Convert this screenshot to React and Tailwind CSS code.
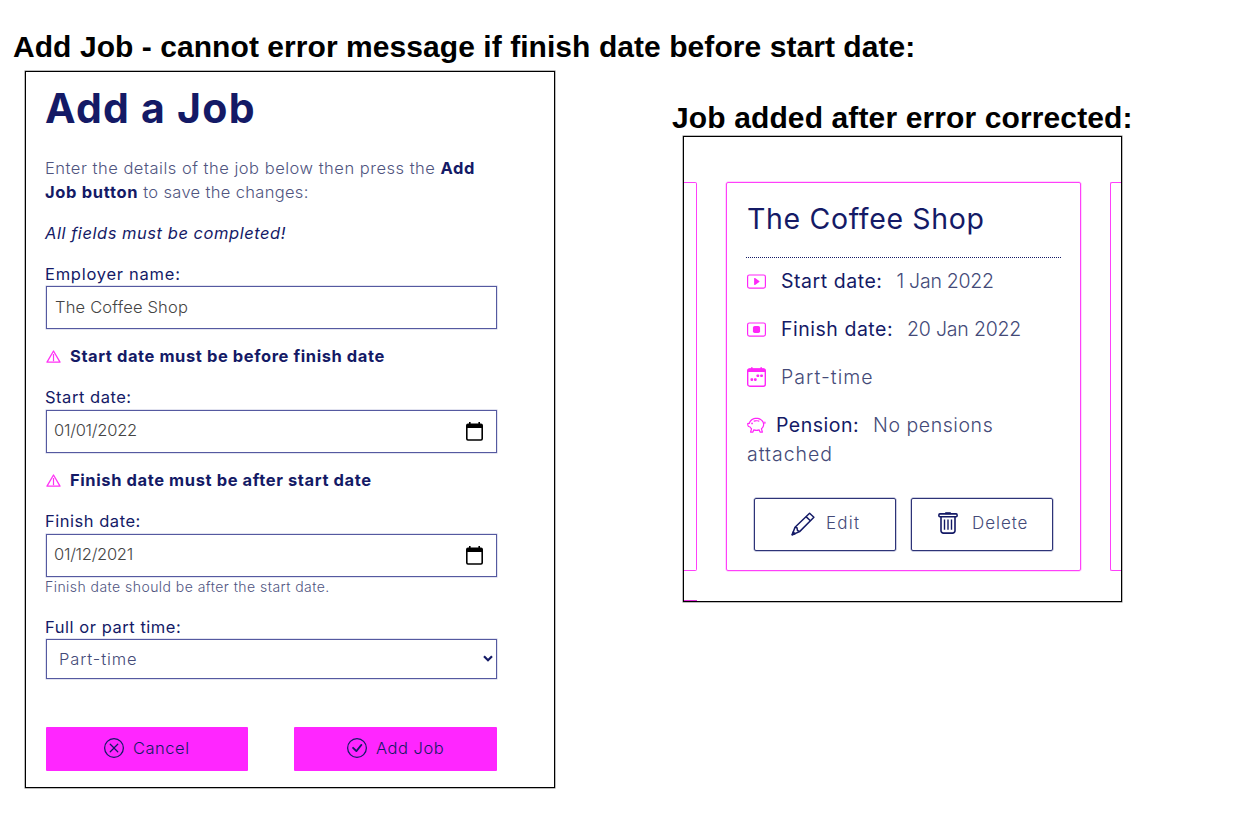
import { BsXCircle, BsCheckCircle, BsPlayBtn, BsStopBtn, BsPiggyBank } from "react-icons/bs";

function WarningIcon() {
  return (
    <svg className="h-[13px] w-[15px] shrink-0" viewBox="0 0 15 13" fill="none" stroke="#ff33f5" strokeLinejoin="round">
      <path d="M7.5 1 14 12.2H1Z" strokeWidth="1.3" />
      <path d="M7.5 4v7.200" strokeWidth="1.2" />
    </svg>
  );
}

function CalendarPicker() {
  return (
    <svg className="h-[19px] w-[17px] shrink-0" viewBox="0 0 17 19">
      <path fillRule="evenodd" fill="#000" d="M3 0h1.600v1.600h7.800V0H14v1.600h1a2 2 0 0 1 2 2V16.800a2 2 0 0 1-2 2H2a2 2 0 0 1-2-2V3.600a2 2 0 0 1 2-2h1ZM1.600 6v10.600q0 .6.6.6h12.600q.6 0 .6-.6V6Z" />
    </svg>
  );
}

function CalendarWeek() {
  return (
    <svg className="mt-[4px] h-[20px] w-[19px] shrink-0" viewBox="0 0 19 20" fill="none">
      <rect x=".7" y="2" width="17.600" height="17.200" rx="2" stroke="#ff26f9" strokeWidth="1.4" />
      <path d="M.5 5V3.500a2 2 0 0 1 2-2h14a2 2 0 0 1 2 2V5ZM4 .3h1.600V2H4ZM13.400.3H15V2h-1.600Z" fill="#ff26f9" />
      <g fill="#ff26f9">
        <rect x="9.500" y="7.400" width="2.700" height="2.700" rx=".8" />
        <rect x="13.200" y="7.400" width="2.700" height="2.700" rx=".8" />
        <rect x="3.500" y="11.200" width="2.700" height="2.700" rx=".8" />
        <rect x="7" y="11.200" width="2.700" height="2.700" rx=".8" />
      </g>
    </svg>
  );
}

function PencilIcon() {
  return (
    <svg className="h-[24px] w-[24px]" viewBox="0 0 24 24" fill="none" stroke="#141a66" strokeWidth="1.500" strokeLinejoin="round">
      <path d="M1.200 22.800 4 15.200 18.600 1.200 22.900 5.200 8.600 19.600Z" />
      <path d="M15 4.600 19.400 8.700M4 15.200l2 .6.500 2.700 2.100 1.100" />
      <path d="M1.200 22.800l1-2.800 1.800 1.800Z" fill="#141a66" />
    </svg>
  );
}

function TrashIcon() {
  return (
    <svg className="h-[22px] w-[20px]" viewBox="0 0 20 22" fill="none" stroke="#141a66" strokeWidth="1.600" strokeLinejoin="round">
      <path d="M7.200 1.200h5.600" strokeWidth="2" />
      <rect x=".9" y="1.900" width="18.200" height="2.800" rx="1" />
      <path d="M3 4.700v14a2.400 2.400 0 0 0 2.400 2.400h9.200a2.400 2.400 0 0 0 2.400-2.400v-14" />
      <path d="M6.500 7.500v10.300M10 7.500v10.300M13.500 7.500v10.300" strokeWidth="1.400" />
    </svg>
  );
}

function ErrorLine({ children }) {
  return (
    <div className="flex h-6 items-center gap-[9px]">
      <WarningIcon />
      <p className="font-bold">{children}</p>
    </div>
  );
}

export default function App() {
  return (
    <main className="flex h-[820px] w-[1238px] overflow-hidden bg-white font-['Inter',sans-serif] text-[16.5px] leading-6 whitespace-nowrap text-[#141a66]">
      <div className="w-[672px] shrink-0 pt-[29px]">
        <h2 className="h-[42px] pl-[13px] font-['Liberation_Sans',sans-serif] text-[30px] leading-[36px] font-bold tracking-[0.06px] text-black">
          Add Job - cannot error message if finish date before start date:
        </h2>
        <section className="ml-[25px] h-[717px] w-[530px] border border-black pt-[13px] pl-[20px] shadow-[0_0_0_0.5px_#777]">
          <h1 className="-ml-px h-[71px] text-[41px] leading-[47px] font-bold tracking-[1.250px]">Add a Job</h1>
          <p className="-ml-px h-[65px] w-[452px] font-light text-[#50557f]">
            <span className="tracking-[0.510px]">Enter the details of the job below then press the </span>
            <b className="font-bold tracking-[0.600px] text-[#141a66]">Add</b>
            <br />
            <b className="font-bold tracking-[0.680px] text-[#141a66]">Job button</b>
            <span className="tracking-[0.330px]"> to save the changes:</span>
          </p>
          <p className="-ml-px h-[41px] tracking-[0.540px] italic">All fields must be completed!</p>

          <p className="-ml-px h-[24px] tracking-[0.740px]">Employer name:</p>
          <div className="flex h-[43px] w-[451px] items-center border border-[#5559a0] pb-[2px] pl-[8px] font-light tracking-[0.180px] text-[#444] shadow-[0_0_0_0.5px_#c4c6e0]">The Coffee Shop</div>
          <div className="h-[56px] pt-[15px] tracking-[0.580px]"><ErrorLine>Start date must be before finish date</ErrorLine></div>

          <p className="-ml-px h-[25px] tracking-[0.530px]">Start date:</p>
          <div className="flex h-[43px] w-[451px] items-center justify-between border border-[#5559a0] pr-[13px] pl-[7px] font-light text-[#444] shadow-[0_0_0_0.5px_#c4c6e0]">
            <span className="pb-[3px] tracking-[-0.250px]">01/01/2022</span>
            <CalendarPicker />
          </div>
          <div className="h-[56px] pt-[15px] tracking-[0.600px]"><ErrorLine>Finish date must be after start date</ErrorLine></div>

          <p className="-ml-px h-[25px] tracking-[0.520px]">Finish date:</p>
          <div className="flex h-[43px] w-[451px] items-center justify-between border border-[#5559a0] pr-[13px] pl-[7px] font-light text-[#444] shadow-[0_0_0_0.5px_#c4c6e0]">
            <span className="pb-[3px] tracking-[-0.280px]">01/12/2021</span>
            <CalendarPicker />
          </div>
          <p className="-ml-px h-[38px] text-[14px] leading-[20px] font-light tracking-[0.450px] text-[#50557f]">Finish date should be after the start date.</p>

          <p className="-ml-px h-[24px] tracking-[0.540px]">Full or part time:</p>
          <div className="flex h-[40px] w-[451px] items-center justify-between border border-[#5559a0] pr-[3px] pb-px pl-[12px] font-light tracking-[0.900px] text-[#444a78] shadow-[0_0_0_0.5px_#c4c6e0]">
            Part-time
            <svg className="h-[7px] w-[10px]" viewBox="0 0 10 7" fill="none" stroke="#141a66" strokeWidth="2.200"><path d="M1 1.200 5 5.200 9 1.200" /></svg>
          </div>

          <div className="mt-[48px] flex w-[451px] justify-between font-light text-[#141a66]">
            <div className="flex h-[44px] w-[202px] items-center rounded-[1px] bg-[#ff26ff] pb-[2px] pl-[58px]">
              <BsXCircle className="size-[20px]" />
              <span className="ml-[9px] tracking-[0.520px]">Cancel</span>
            </div>
            <div className="flex h-[44px] w-[203px] items-center rounded-[1px] bg-[#ff26ff] pb-[2px] pl-[53px]">
              <BsCheckCircle className="size-[20px]" />
              <span className="ml-[9px] tracking-[0.500px]">Add Job</span>
            </div>
          </div>
        </section>
      </div>

      <div className="pt-[100px]">
        <h2 className="h-[36px] font-['Liberation_Sans',sans-serif] text-[30px] leading-[36px] font-bold tracking-[0.120px] text-black">
          Job added after error corrected:
        </h2>
        <section className="ml-[11px] flex h-[466px] w-[439px] flex-col border border-black shadow-[0_0_0_0.5px_#777]">
          <div className="mt-[45px] flex h-[389px] justify-between">
            <div className="w-[13px] rounded-r-[2px] border border-l-0 border-[#ff40fa]" />
            <article className="w-[355px] rounded-[2px] border border-[#ff40fa] pt-[18px] pr-[19px] pl-[19px] text-[19.5px] leading-[29px] shadow-[0_0_0_0.5px_#ffb0fc]">
              <h3 className="h-[57px] border-b border-dotted border-[#141a66] pl-px text-[28.500px] leading-[36px] tracking-[0.650px]">The Coffee Shop</h3>
              <div className="mt-[9px] flex h-[48px] pl-px">
                <BsPlayBtn className="mt-[5px] size-[19px] text-[#ff26f9]" />
                <span className="ml-[15px] tracking-[0.540px]">Start date:</span>
                <span className="ml-[14px] font-light tracking-[-0.250px] text-[#444a78]">1 Jan 2022</span>
              </div>
              <div className="flex h-[48px] pl-px">
                <BsStopBtn className="mt-[5px] size-[19px] text-[#ff26f9]" />
                <span className="ml-[15px] tracking-[0.520px]">Finish date:</span>
                <span className="ml-[14px] font-light tracking-[-0.200px] text-[#444a78]">20 Jan 2022</span>
              </div>
              <div className="flex h-[48px] pl-px">
                <CalendarWeek />
                <span className="ml-[15px] font-light tracking-[1.050px] text-[#444a78]">Part-time</span>
              </div>
              <div className="flex h-[29px] pl-px">
                <BsPiggyBank className="mt-[5px] size-[19px] text-[#ff26f9]" />
                <span className="ml-[10px] tracking-[0.490px]">Pension:</span>
                <span className="ml-[14px] font-light tracking-[0.560px] text-[#444a78]">No pensions</span>
              </div>
              <p className="pl-px font-light tracking-[0.980px] text-[#444a78]">attached</p>
              <div className="mt-[29px] flex justify-between px-[8px] text-[17px] font-light text-[#444a78]">
                <div className="flex h-[53px] w-[142px] items-center rounded-[2px] border border-[#2d3377] pb-[2px] pl-[36px] shadow-[0_0_0_0.5px_#9a9dc4]">
                  <PencilIcon />
                  <span className="ml-[11px] tracking-[1.200px]">Edit</span>
                </div>
                <div className="flex h-[53px] w-[142px] items-center rounded-[2px] border border-[#2d3377] pb-[3px] pl-[26px] shadow-[0_0_0_0.5px_#9a9dc4]">
                  <TrashIcon />
                  <span className="ml-[14px] pt-px tracking-[0.950px]">Delete</span>
                </div>
              </div>
            </article>
            <div className="w-[11px] rounded-l-[2px] border border-r-0 border-[#ff40fa]" />
          </div>
          <div className="mt-auto h-px w-[13px] bg-[#e030d8]" />
        </section>
      </div>
    </main>
  );
}
